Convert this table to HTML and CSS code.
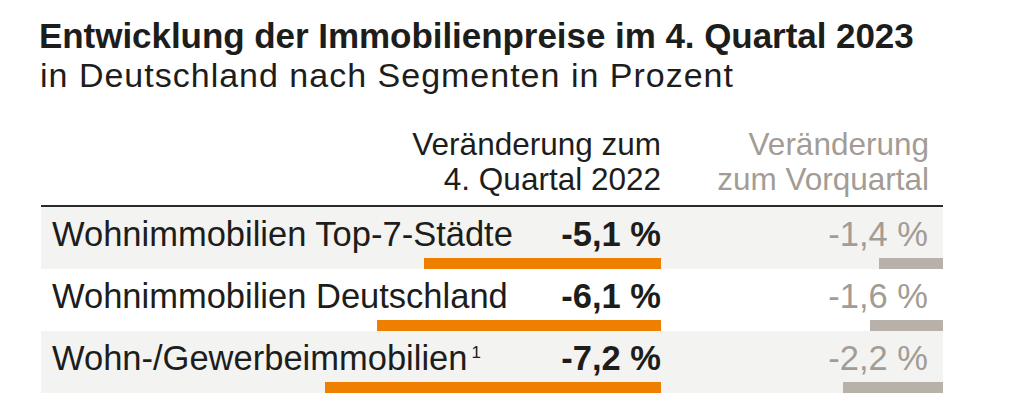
FILE: index.html
```html
<!DOCTYPE html>
<html lang="de">
<head>
<meta charset="utf-8">
<title>Entwicklung der Immobilienpreise</title>
<link rel="stylesheet" href="styles.css">
</head>
<body>
<div class="chart">
  <h1 class="title">Entwicklung der Immobilienpreise im 4. Quartal 2023</h1>
  <p class="subtitle">in Deutschland nach Segmenten in Prozent</p>
  <div class="table">
    <div class="head">
      <div class="h-label"></div>
      <div class="h-main">Veränderung zum<br>4. Quartal 2022</div>
      <div class="h-sec">Veränderung<br>zum Vorquartal</div>
    </div>
    <div class="row shaded">
      <div class="label">Wohnimmobilien Top-7-Städte</div>
      <div class="val">-5,1 %</div>
      <div class="val2">-1,4 %</div>
      <div class="bar" style="width:237px"></div>
      <div class="bar2" style="width:64px"></div>
    </div>
    <div class="row">
      <div class="label">Wohnimmobilien Deutschland</div>
      <div class="val">-6,1 %</div>
      <div class="val2">-1,6 %</div>
      <div class="bar" style="width:284px"></div>
      <div class="bar2" style="width:73px"></div>
    </div>
    <div class="row shaded">
      <div class="label">Wohn-/Gewerbeimmobilien<sup>1</sup></div>
      <div class="val">-7,2 %</div>
      <div class="val2">-2,2 %</div>
      <div class="bar" style="width:336px"></div>
      <div class="bar2" style="width:100px"></div>
    </div>
  </div>
</div>
</body>
</html>
```

FILE: styles.css
```css
html, body {
  margin: 0;
  padding: 0;
  background: #ffffff;
}

body {
  font-family: "Liberation Sans", Arial, sans-serif;
  color: #1d1d1b;
}

.chart {
  padding: 16px 0 0 41px;
  width: 902px;
}

.title {
  margin: 0 0 0 -2px;
  font-size: 35px;
  line-height: 40px;
  font-weight: 700;
  letter-spacing: -0.05px;
}

.subtitle {
  margin: 0 0 0 -1px;
  font-size: 34px;
  line-height: 38px;
  font-weight: 400;
  letter-spacing: 1px;
}

.table {
  margin-top: 33px;
}

.head {
  display: grid;
  grid-template-columns: 1fr auto 282px;
  padding-bottom: 8px;
  border-bottom: 2px solid #2a2a28;
  font-size: 31.5px;
  line-height: 35px;
}

.h-main {
  text-align: right;
}

.h-sec {
  text-align: right;
  padding-right: 14px;
  color: #a39c94;
}

.row {
  display: grid;
  grid-template-columns: 1fr auto 282px;
  grid-template-rows: 38px 11px;
  row-gap: 5px;
  padding-top: 8px;
  font-size: 34.5px;
  line-height: 38px;
}

.shaded {
  background: #f3f3f2;
}

.label {
  padding-left: 11px;
  white-space: nowrap;
}

.label sup {
  font-size: 17px;
  line-height: 0;
  vertical-align: 12px;
  margin-left: 4px;
}

.val {
  font-weight: 700;
  text-align: right;
  white-space: nowrap;
}

.val2 {
  text-align: right;
  padding-right: 15px;
  color: #a39c94;
  white-space: nowrap;
}

.bar {
  grid-column: 1 / 3;
  grid-row: 2;
  justify-self: end;
  background: #ee7f00;
}

.bar2 {
  grid-column: 3;
  grid-row: 2;
  justify-self: end;
  background: #b8b1aa;
}
```
